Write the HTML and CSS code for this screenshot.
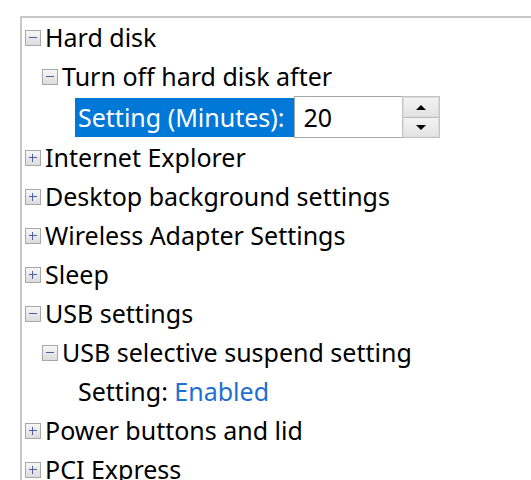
FILE: index.html
```html
<!DOCTYPE html>
<html>
<head>
<meta charset="utf-8">
<link rel="stylesheet" href="styles.css">
</head>
<body>
<div class="tree">
  <div class="row l0"><span class="exp minus"></span><span class="label">Hard disk</span></div>
  <div class="row l1"><span class="exp minus"></span><span class="label">Turn off hard disk after</span></div>
  <div class="row l2 tall"><span class="exp none"></span><span class="label sel">Setting (Minutes):</span><span class="spin"><span class="num">20</span><span class="btns"><span class="btn"><span class="up"></span></span><span class="btn"><span class="down"></span></span></span></span></div>
  <div class="row l0"><span class="exp plus"></span><span class="label">Internet Explorer</span></div>
  <div class="row l0"><span class="exp plus"></span><span class="label">Desktop background settings</span></div>
  <div class="row l0"><span class="exp plus"></span><span class="label">Wireless Adapter Settings</span></div>
  <div class="row l0"><span class="exp plus"></span><span class="label">Sleep</span></div>
  <div class="row l0"><span class="exp minus"></span><span class="label">USB settings</span></div>
  <div class="row l1"><span class="exp minus"></span><span class="label">USB selective suspend setting</span></div>
  <div class="row l2"><span class="exp none"></span><span class="label">Setting: <span class="link">Enabled</span></span></div>
  <div class="row l0"><span class="exp plus"></span><span class="label">Power buttons and lid</span></div>
  <div class="row l0"><span class="exp plus"></span><span class="label">PCI Express</span></div>
</div>
</body>
</html>
```
FILE: styles.css
```css
html, body {
  margin: 0;
  padding: 0;
  background: #ffffff;
  overflow: hidden;
}
body {
  width: 531px;
  height: 480px;
  font-family: "Noto Sans", "Open Sans", sans-serif;
  font-size: 25px;
  color: #000;
}
.tree {
  margin: 16px 0 0 20px;
  border-top: 2px solid #c9c9c9;
  border-left: 2px solid #c9c9c9;
  height: 600px;
  padding-left: 3px;
}
.row {
  display: flex;
  align-items: center;
  height: 39px;
  white-space: nowrap;
}
.row.tall { height: 42px; }
.l1 { padding-left: 17px; }
.l2 { padding-left: 34px; }
.exp {
  flex: none;
  width: 14px;
  height: 14px;
  border: 1px solid #a8a8a8;
  background: linear-gradient(#f7f7f7, #dcdcdc);
  position: relative;
  margin-right: 4px;
}
.exp.none { border-color: transparent; background: none; margin-right: 0; }
.exp.minus::before, .exp.plus::before {
  content: "";
  position: absolute;
  left: 3px;
  top: 6px;
  width: 8px;
  height: 1px;
  background: #4d5f9c;
}
.exp.plus::after {
  content: "";
  position: absolute;
  left: 6px;
  top: 3px;
  width: 1px;
  height: 8px;
  background: #4d5f9c;
}
.label { line-height: 39px; }
.l2 .label { padding-left: 3px; }
.l2 .label.sel {
  background: #0078d7;
  color: #fff;
  padding: 0 10px 0 3px;
}
.spin {
  display: flex;
  height: 42px;
}
.num {
  width: 99px;
  border: 1px solid #a8a8a8;
  border-right: none;
  background: #fff;
  line-height: 40px;
  padding-left: 8px;
}
.btns {
  display: flex;
  flex-direction: column;
  width: 36px;
  border: 1px solid #c4c4c4;
}
.btn {
  flex: 1;
  display: flex;
  align-items: center;
  justify-content: center;
  background: linear-gradient(#f3f3f3, #e4e4e4);
  border: 1px solid #dcdcdc;
}
.btn + .btn { border-top: 1px solid #bdbdbd; }
.up {
  width: 0; height: 0;
  border-left: 5px solid transparent;
  border-right: 5px solid transparent;
  border-bottom: 5px solid #000;
}
.down {
  width: 0; height: 0;
  border-left: 5px solid transparent;
  border-right: 5px solid transparent;
  border-top: 5px solid #000;
}
.link { color: #1d6fd3; }
```
